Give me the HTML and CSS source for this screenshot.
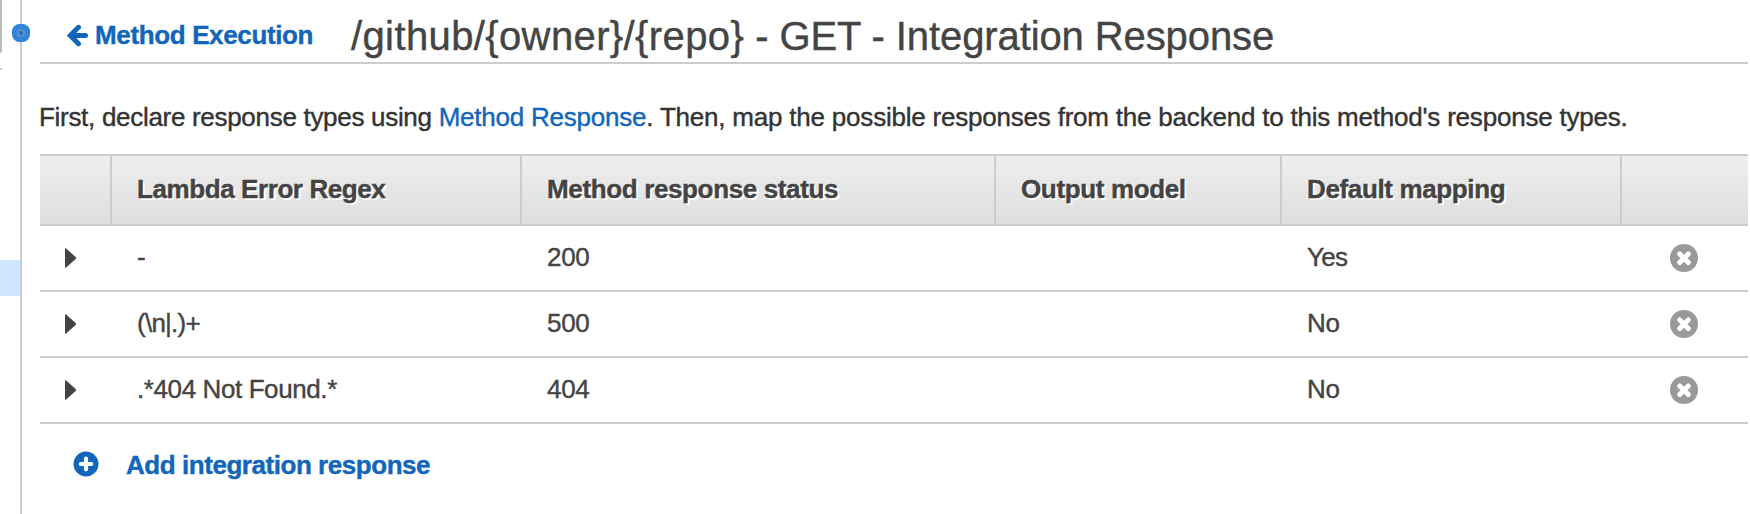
FILE: index.html
```html
<!DOCTYPE html>
<html lang="en">
<head>
<meta charset="utf-8">
<title>Integration Response</title>
<link rel="stylesheet" href="styles.css">
</head>
<body>
<svg class="defs" width="0" height="0" aria-hidden="true">
  <symbol id="remove" viewBox="0 0 28 28">
    <circle cx="14" cy="14" r="14" fill="#999"/>
    <path d="M9.700 10l8.600 8.600M18.300 10l-8.600 8.600" stroke="#fff" stroke-width="5" stroke-linecap="round"/>
  </symbol>
  <symbol id="caret" viewBox="0 0 12 20">
    <path d="M0 1.200Q0 0 1.200 .5L10.600 9Q11.600 10 10.600 11L1.200 19.500Q0 20 0 18.800Z" fill="#444"/>
  </symbol>
</svg>
<div class="app">
  <aside class="side">
    <div class="side-button"></div>
    <div class="side-rule"></div>
    <div class="side-selected"></div>
  </aside>
  <svg class="handle" width="18" height="18" viewBox="0 0 18 18">
    <rect width="18" height="18" rx="7.500" fill="#3184dc"/>
    <circle cx="9" cy="9" r="3.300" fill="#2f80d4" stroke="#6f94b5" stroke-width="1.500"/>
    <circle cx="9" cy="9" r="1.200" fill="#1166cc"/>
  </svg>
  <main class="main">
    <header class="head">
      <a class="back"><svg width="21" height="23" viewBox="0 0 21 23"><path d="M11.500 3.300L3.200 11.500l8.300 8.200M4 11.500h14.500" fill="none" stroke="#1166bb" stroke-width="5" stroke-linecap="round"/></svg><span class="back-text">Method Execution</span></a>
      <h1 class="title"><span class="path">/github/{owner}/{repo}</span> - GET - Integration Response</h1>
    </header>
    <p class="intro"><span class="lead">First, declare response types using </span><a class="link">Method Response</a>. Then, map the possible responses from the backend to this method's response types.</p>
    <div class="table">
      <div class="row labels"><div></div><div class="c1">Lambda Error Regex</div><div class="c2">Method response status</div><div class="c3">Output model</div><div class="c4">Default mapping</div><div></div></div>
      <div class="row"><div class="toggle"><svg width="12" height="20"><use href="#caret"/></svg></div><div>-</div><div>200</div><div></div><div class="yes">Yes</div><div class="remove"><svg width="28" height="28"><use href="#remove"/></svg></div></div>
      <div class="row"><div class="toggle"><svg width="12" height="20"><use href="#caret"/></svg></div><div class="pattern">(\n|.)+</div><div>500</div><div></div><div>No</div><div class="remove"><svg width="28" height="28"><use href="#remove"/></svg></div></div>
      <div class="row"><div class="toggle"><svg width="12" height="20"><use href="#caret"/></svg></div><div class="regex">.*404 Not Found.*</div><div>404</div><div></div><div>No</div><div class="remove"><svg width="28" height="28"><use href="#remove"/></svg></div></div>
    </div>
    <a class="add"><svg width="26" height="26" viewBox="0 0 26 26"><circle cx="13" cy="13" r="12.500" fill="#1166bb"/><path d="M13 7.700v10.600M7.700 13h10.600" stroke="#fff" stroke-width="4.200" stroke-linecap="round"/></svg><span class="add-text">Add integration response</span></a>
  </main>
</div>
</body>
</html>
```
FILE: styles.css
```css
* { box-sizing: border-box; }
body {
  margin: 0;
  background: #fff;
  color: #444;
  font: 26px/62px "Liberation Sans", Arial, sans-serif;
  letter-spacing: -.3px;
  -webkit-text-stroke: .4px currentColor;
  overflow: hidden;
}
svg { display: block; flex: none; }
.defs { position: absolute; }
.app { position: relative; display: flex; width: 1750px; height: 514px; }
.side { width: 22px; border-right: 2px solid #ccc; flex: none; }
.side-button {
  width: 2px;
  height: 53px;
  background: #bbb;
  border-radius: 0 0 2px 0;
}
.side-rule { width: 2px; height: 2px; margin-top: 15px; background: #ccc; }
.side-selected { height: 36px; margin-top: 190px; background: #cfe6ff; }
.handle { position: absolute; left: 12px; top: 24px; }
.main { width: 1726px; padding-left: 18px; }
.head { display: flex; height: 64px; border-bottom: 2px solid #ccc; white-space: nowrap; }
.back {
  display: flex;
  width: 311px;
  padding: 0 0 0 27px;
  gap: 7px;
  color: #1166bb;
  font-weight: bold;
}
.back svg { margin-top: 24px; }
.back-text { line-height: 70px; letter-spacing: -.36px; }
.title { margin: 0; font-size: 40px; font-weight: normal; line-height: 72px; letter-spacing: -.1px; }
.path { letter-spacing: .38px; }
.intro {
  margin: 0 0 0 -1px;
  height: 90px;
  line-height: 106px;
  color: #333;
  letter-spacing: -.21px;
  white-space: nowrap;
}
.lead { letter-spacing: -.3px; }
.link { color: #1166bb; letter-spacing: -.22px; }
.table { border-top: 2px solid #ccc; }
.row {
  display: grid;
  grid-template-columns: 70px 410px 474px 286px 340px 128px;
  height: 66px;
  border-bottom: 2px solid #ccc;
  white-space: nowrap;
}
.row > div { padding-left: 27px; }
.labels {
  height: 70px;
  line-height: 66px;
  font-weight: bold;
  letter-spacing: -.36px;
  text-shadow: 2px 2px 0 #fff;
  background: linear-gradient(#eee, #dedede);
}
.labels > div + div { border-left: 2px solid #ccc; padding-left: 25px; }
.labels > .c1 { letter-spacing: -.41px; }
.yes { letter-spacing: -.7px; }
.pattern { letter-spacing: -.75px; }
.regex { letter-spacing: -.4px; }
.row > .toggle { padding: 22px 0 0 25px; }
.row > .remove { padding: 18px 0 0 50px; }
.add {
  display: flex;
  gap: 27px;
  padding: 27px 0 0 33px;
  color: #1166bb;
  font-weight: bold;
  line-height: 29px;
}
.add-text { letter-spacing: -.45px; }
```
